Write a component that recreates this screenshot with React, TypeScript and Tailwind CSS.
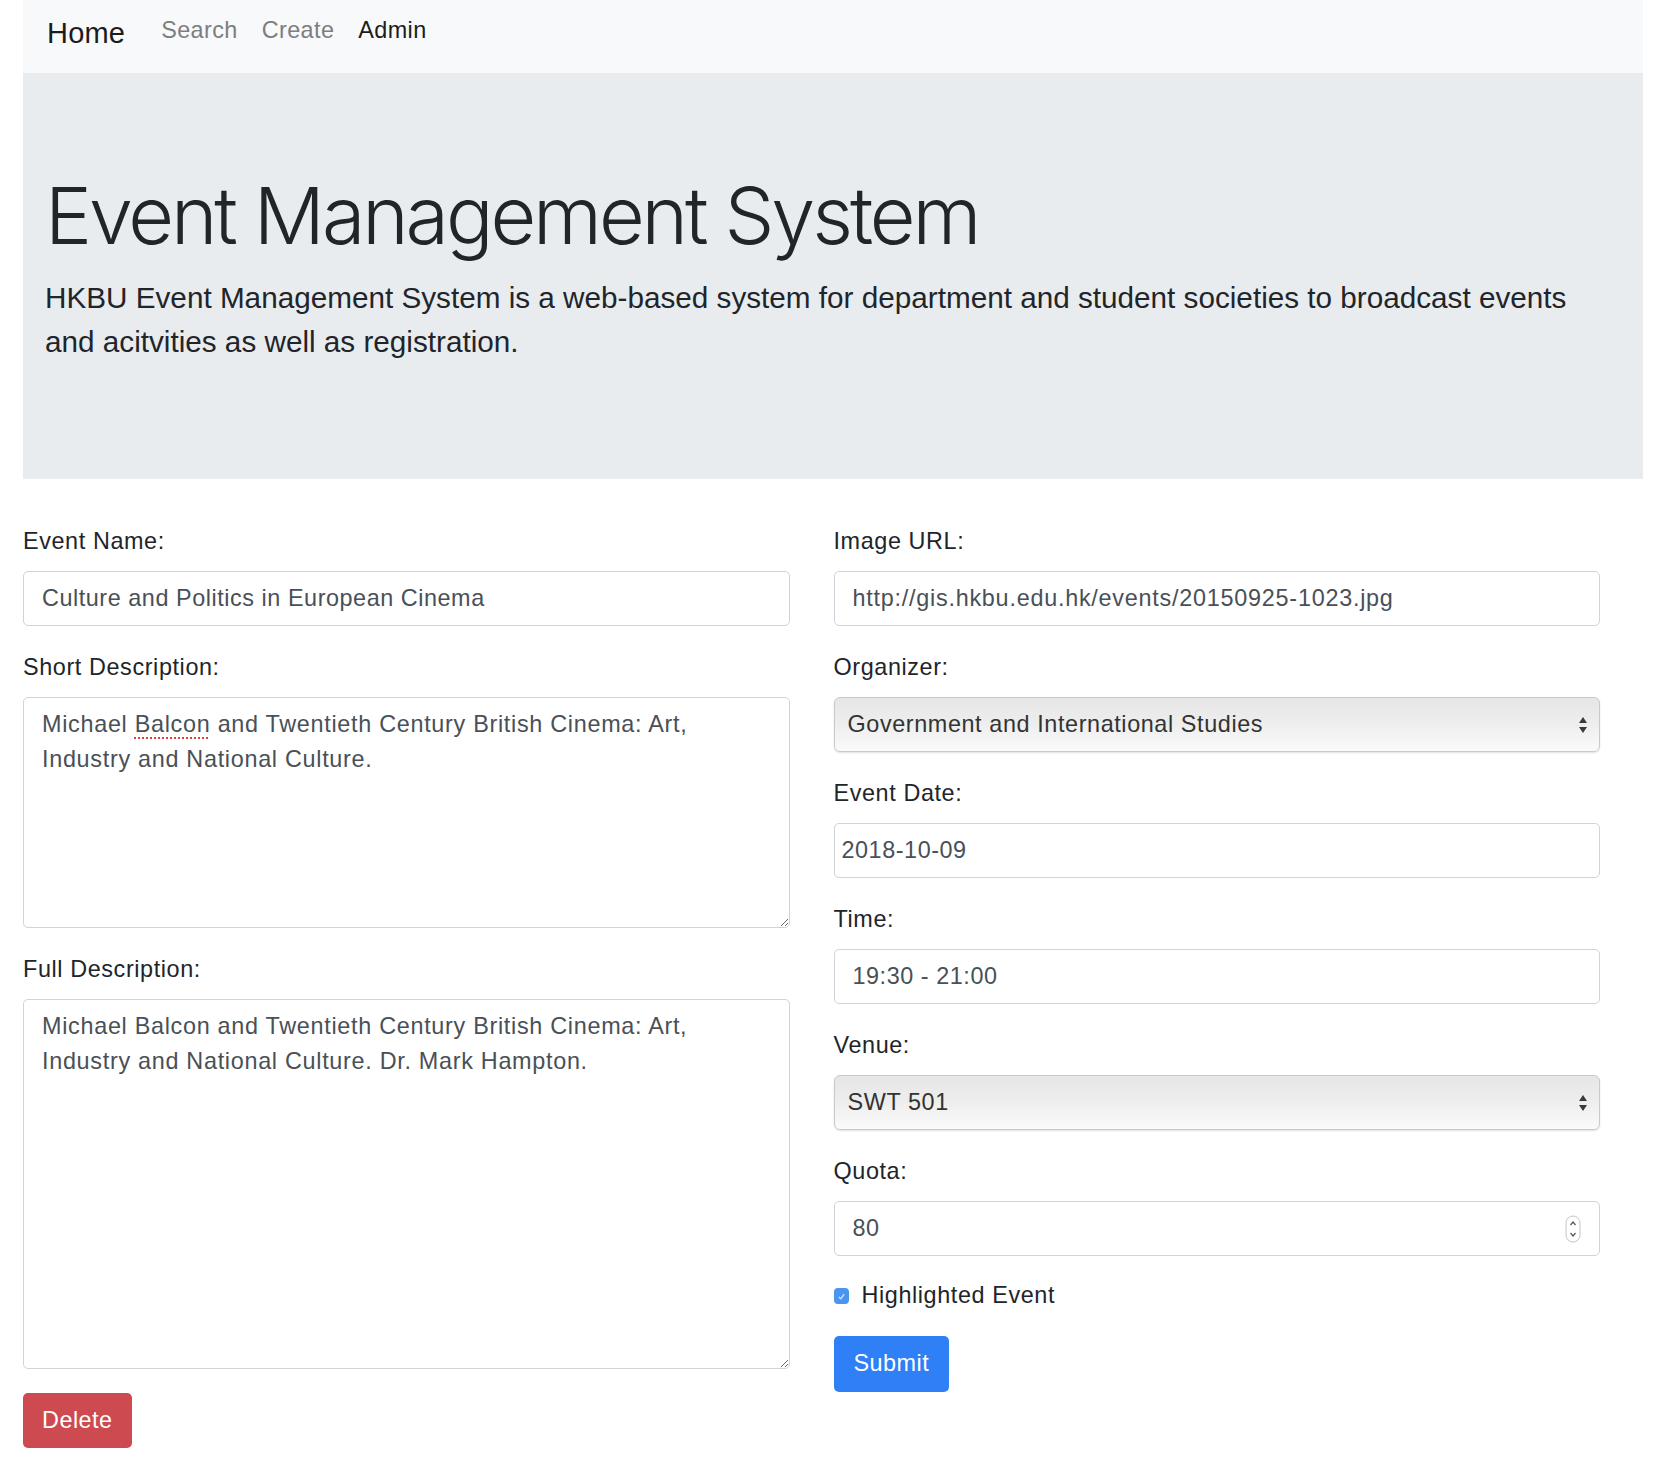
import type { ReactNode } from "react";

const labelCls = "block text-[23.4px] leading-[35px] mb-[12px] tracking-[0.6px] text-[#212529]";
const inputCls =
  "block h-[55px] w-full rounded-[5px] border border-[#ced4da] bg-white text-[23.4px] tracking-[0.55px] text-[#495057] outline-none";

function Group({ label, children }: { label: string; children: ReactNode }) {
  return (
    <div className="mb-[24px]">
      <label className={labelCls}>{label}</label>
      {children}
    </div>
  );
}

function SelectArrows() {
  return (
    <svg width="10" height="20" viewBox="0 0 10 20" className="pointer-events-none absolute right-[12px] top-1/2 -translate-y-1/2">
      <path d="M5 2 L9 8 L1 8 Z" fill="#3a3a3a" />
      <path d="M5 18 L9 12 L1 12 Z" fill="#3a3a3a" />
    </svg>
  );
}

function FakeSelect({ value }: { value: string }) {
  return (
    <div className="relative">
      <select
        defaultValue={value}
        className="block h-[55px] w-full appearance-none rounded-[6px] border border-[#c9c9c9] bg-gradient-to-b from-[#e6e6e6] via-[#eeeeee] to-[#fbfbfb] pl-[13px] text-[23.4px] tracking-[0.6px] text-[#333] shadow-[0_1px_2px_rgba(0,0,0,0.12)] outline-none"
      >
        <option>{value}</option>
      </select>
      <SelectArrows />
    </div>
  );
}

export default function App() {
  return (
    <div className="min-h-screen bg-white font-['Liberation_Sans',Arial,sans-serif] text-[#212529]">
      <div className="pl-[23px] pr-[29px]">
        {/* navbar */}
        <nav className="flex h-[73px] items-start bg-[#f8f9fa] pl-[24px] pt-[19px]">
          <a className="mr-[24px] text-[29px] leading-[29px] tracking-[0.2px] text-[#1c1c1c]">Home</a>
          <a className="px-[12px] text-[23.4px] leading-[23.4px] tracking-[0.4px] text-[#7d7e7f]">Search</a>
          <a className="px-[12px] text-[23.4px] leading-[23.4px] tracking-[0.4px] text-[#7d7e7f]">Create</a>
          <a className="px-[12px] text-[23.4px] leading-[23.4px] tracking-[0.4px] text-[#1c1c1c]">Admin</a>
        </nav>

        {/* jumbotron */}
        <div className="bg-[#e9ecef] px-[22px] py-[93px]">
          <h1 className="mb-[12px] font-['Inter',sans-serif] text-[79px] font-light leading-[98px] tracking-[-3.1px] text-[#212529]">
            Event Management System
          </h1>
          <p className="mb-[23px] text-[29.7px] leading-[43.5px] text-[#212529]">
            HKBU Event Management System is a web-based system for department and student societies to broadcast events
            <br />
            and acitvities as well as registration.
          </p>
        </div>
      </div>

      <form className="mt-[45px] grid grid-cols-2 gap-x-[44px] pl-[23px] pr-[72px]">
        <div>
          <Group label="Event Name:">
            <input className={`${inputCls} px-[18px]`} defaultValue="Culture and Politics in European Cinema" />
          </Group>
          <Group label="Short Description:">
            <div className="h-[231px] resize-y overflow-auto rounded-[5px] border border-[#ced4da] px-[18px] pt-[9px] text-[23.4px] leading-[35px] tracking-[0.7px] text-[#495057]">
              Michael{" "}
              <span className="underline decoration-[#e0403a] decoration-dotted decoration-2 underline-offset-[5px]">Balcon</span>{" "}
              and Twentieth Century British Cinema: Art,
              <br />
              Industry and National Culture.
            </div>
          </Group>
          <Group label="Full Description:">
            <div className="h-[370px] resize-y overflow-auto rounded-[5px] border border-[#ced4da] px-[18px] pt-[9px] text-[23.4px] leading-[35px] tracking-[0.7px] text-[#495057]">
              Michael Balcon and Twentieth Century British Cinema: Art,
              <br />
              Industry and National Culture. Dr. Mark Hampton.
            </div>
          </Group>
          <button
            type="button"
            className="h-[55px] rounded-[5px] bg-[#cd4a50] px-[19px] text-[23.4px] tracking-[0.5px] text-white"
          >
            Delete
          </button>
        </div>

        <div>
          <Group label="Image URL:">
            <input className={`${inputCls} px-[18px] tracking-[0.75px]`} defaultValue="http://gis.hkbu.edu.hk/events/20150925-1023.jpg" />
          </Group>
          <Group label="Organizer:">
            <FakeSelect value="Government and International Studies" />
          </Group>
          <Group label="Event Date:">
            <input className={`${inputCls} px-[7px] tracking-[0.8px]`} defaultValue="2018-10-09" />
          </Group>
          <Group label="Time:">
            <input className={`${inputCls} px-[18px]`} defaultValue="19:30 - 21:00" />
          </Group>
          <Group label="Venue:">
            <FakeSelect value="SWT 501" />
          </Group>
          <Group label="Quota:">
            <div className="relative">
              <input className={`${inputCls} px-[18px]`} defaultValue="80" />
              <svg width="16" height="28" viewBox="0 0 16 28" className="pointer-events-none absolute right-[19px] top-1/2 -translate-y-1/2">
                <rect x="1" y="1" width="14" height="26" rx="7" fill="#fff" stroke="#c4c4c4" />
                <path d="M5.5 10 L8 7 L10.5 10" fill="none" stroke="#555" strokeWidth="1.2" />
                <path d="M5.5 18 L8 21 L10.5 18" fill="none" stroke="#555" strokeWidth="1.2" />
              </svg>
            </div>
          </Group>
          <div className="mb-[24px] flex h-[32px] items-center">
            <span className="mr-[13px] flex h-[16px] w-[15px] items-center justify-center rounded-[4px] bg-[#4a94f2]">
              <svg width="9" height="9" viewBox="0 0 10 10">
                <path d="M2 5.5 L4.2 7.5 L8 2.5" fill="none" stroke="#cfe2fb" strokeWidth="1.5" />
              </svg>
            </span>
            <span className="text-[23.4px] tracking-[0.6px] text-[#212529]">Highlighted Event</span>
          </div>
          <button
            type="button"
            className="h-[56px] rounded-[5px] bg-[#2f80f7] px-[20px] text-[23.4px] tracking-[0.5px] text-white"
          >
            Submit
          </button>
        </div>
      </form>
    </div>
  );
}
